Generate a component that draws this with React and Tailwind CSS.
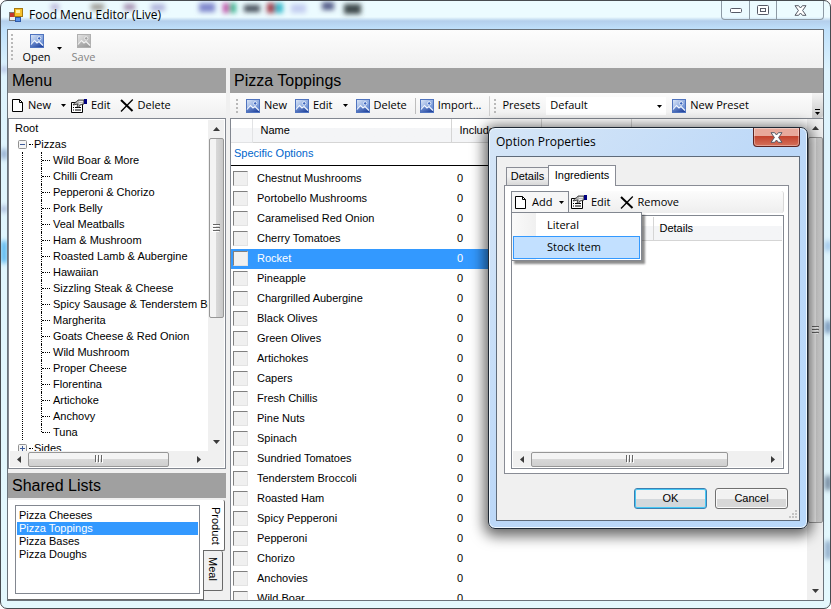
import React, { useState } from "react";

const pizzas = [
  "Wild Boar & More", "Chilli Cream", "Pepperoni & Chorizo", "Pork Belly",
  "Veal Meatballs", "Ham & Mushroom", "Roasted Lamb & Aubergine", "Hawaiian",
  "Sizzling Steak & Cheese", "Spicy Sausage & Tenderstem Broccoli", "Margherita",
  "Goats Cheese & Red Onion", "Wild Mushroom", "Proper Cheese", "Florentina",
  "Artichoke", "Anchovy", "Tuna",
];

const toppings = [
  "Chestnut Mushrooms", "Portobello Mushrooms", "Caramelised Red Onion",
  "Cherry Tomatoes", "Rocket", "Pineapple", "Chargrilled Aubergine",
  "Black Olives", "Green Olives", "Artichokes", "Capers", "Fresh Chillis",
  "Pine Nuts", "Spinach", "Sundried Tomatoes", "Tenderstem Broccoli",
  "Roasted Ham", "Spicy Pepperoni", "Pepperoni", "Chorizo", "Anchovies",
  "Wild Boar",
];

const sharedLists = ["Pizza Cheeses", "Pizza Toppings", "Pizza Bases", "Pizza Doughs"];

function PictureIcon({ muted = false }) {
  const id = muted ? "pic-muted" : "pic-blue";
  return (
    <svg width="14" height="14" viewBox="0 0 14 14" className="shrink-0" aria-hidden="true">
      <defs>
        <linearGradient id={`${id}-sky`} x1="0" y1="0" x2="1" y2="1">
          <stop offset="0" stopColor={muted ? "#e4e4e4" : "#dfe9f8"} />
          <stop offset="1" stopColor={muted ? "#a8a8a8" : "#4b77cb"} />
        </linearGradient>
        <linearGradient id={`${id}-hill`} x1="0" y1="0" x2="1" y2="1">
          <stop offset="0" stopColor={muted ? "#c0c0c0" : "#86a6e0"} />
          <stop offset="1" stopColor={muted ? "#979797" : "#1a3c98"} />
        </linearGradient>
      </defs>
      <rect x="0.5" y="0.5" width="13" height="13" fill={`url(#${id}-sky)`} stroke={muted ? "#b0b0b0" : "#5074bf"} />
      <path d="M1 10.5L4.5 6.5L7 9L9 7.5L13 11.5V13H1Z" fill={`url(#${id}-hill)`} />
      <path d="M1 10.5L4.5 6.5L7 9L9 7.5L13 11.5" fill="none" stroke={muted ? "#f2f2f2" : "#f2f7ff"} strokeWidth="1.1" />
      <circle cx="9.2" cy="4.4" r="1.7" fill={muted ? "#a0a0a0" : "#3d66bd"} stroke={muted ? "#f2f2f2" : "#f2f7ff"} strokeWidth="0.9" />
    </svg>
  );
}

function PageIcon() {
  return (
    <svg width="12" height="14" viewBox="0 0 12 14" className="shrink-0" aria-hidden="true">
      <path d="M0.5 0.5H7.5L10.5 3.5V12.5H0.5Z" fill="#fff" stroke="#000" />
      <path d="M7.5 0.5V3.5H10.5" fill="none" stroke="#000" />
    </svg>
  );
}

function PropertiesIcon() {
  return (
    <svg width="16" height="14" viewBox="0 0 16 14" className="shrink-0" aria-hidden="true">
      <path d="M0.5 3.5H11.5V13.5H0.5Z" fill="#fff" stroke="#000" />
      <path d="M2 8.5H3M4 8.5H10M2 11H3M4 11H10" stroke="#000" />
      <path d="M2 6L4 3.5L6 2.5L7 1H13V5L9 6L7.5 8.5L6 7.5L7 5Z" fill="#b8b8b8" stroke="#222" strokeWidth="0.8" />
      <path d="M8 2.5H12M8 4.5H11" stroke="#fff" strokeWidth="0.7" />
      <path d="M13 0H16V5H13Z" fill="#000080" />
    </svg>
  );
}

function CrossIcon() {
  return (
    <svg width="14" height="13" viewBox="0 0 14 13" className="shrink-0" aria-hidden="true">
      <path d="M1 1L12.5 12" stroke="#000" strokeWidth="2" />
      <path d="M12.8 0.5L1 12.5" stroke="#000" strokeWidth="1.3" />
    </svg>
  );
}

function CloseGlyph() {
  return (
    <svg width="13" height="11" viewBox="0 0 13 11" aria-hidden="true">
      <path d="M1 0.7H4.6L6.5 3L8.4 0.7H12L8.6 5.5L12 10.3H8.4L6.5 8L4.6 10.3H1L4.4 5.5Z" fill="#fff" stroke="#565a66" />
    </svg>
  );
}

function DownArrow() {
  return (
    <svg width="5" height="3" viewBox="0 0 5 3" className="shrink-0" aria-hidden="true">
      <path d="M0 0H5L2.5 3Z" fill="#000" />
    </svg>
  );
}

function ScrollArrow({ d }) {
  return (
    <svg width="7" height="7" viewBox="0 0 7 7" aria-hidden="true">
      <path d={d} fill="#3a3a3a" />
    </svg>
  );
}

function Grip({ vertical = false }) {
  return (
    <svg width="8" height="8" viewBox="0 0 8 8" className={vertical ? "rotate-90" : ""} aria-hidden="true">
      <path d="M0.5 0V7M3.5 0V7M6.5 0V7" stroke="#666" />
      <path d="M1.5 1V8M4.5 1V8M7.5 1V8" stroke="#fff" />
    </svg>
  );
}

function HScroll({ thumb }) {
  return (
    <div className="flex h-4 shrink-0 items-center bg-[#f0f0f0]">
      <div className="flex w-[18px] justify-center"><ScrollArrow d="M5 0V7L1 3.5Z" /></div>
      <div className={`flex h-[15px] items-center justify-center rounded-[2px] border border-[#979797] bg-linear-to-b from-[#f4f4f4] from-50% via-[#d8d8d8] via-50% to-[#cfcfcf] ${thumb}`}>
        <Grip />
      </div>
      <div className="ml-auto flex w-5 justify-center"><ScrollArrow d="M2 0V7L6 3.5Z" /></div>
    </div>
  );
}

function VScroll({ thumb }) {
  return (
    <div className="flex w-4 shrink-0 flex-col items-center bg-[#f0f0f0]">
      <div className="flex h-[18px] items-center"><ScrollArrow d="M0 5H7L3.5 1Z" /></div>
      <div className={`flex w-[15px] items-center justify-center rounded-[2px] border border-[#979797] bg-linear-to-r from-[#f4f4f4] from-50% via-[#d8d8d8] via-50% to-[#c8c8c8] ${thumb}`}>
        <Grip vertical />
      </div>
      <div className="mt-auto flex h-5 items-center"><ScrollArrow d="M0 2H7L3.5 6Z" /></div>
    </div>
  );
}

function Handle({ tall = false }) {
  return <span className={`w-0.5 shrink-0 bg-[repeating-linear-gradient(to_bottom,#b9b9b9_0px,#b9b9b9_2px,transparent_2px,transparent_4px)] ${tall ? "h-[26px]" : "h-[14px]"}`} />;
}

function ToolButton({ icon, label, arrow = false }) {
  return (
    <button type="button" className="flex shrink-0 items-center gap-1 whitespace-nowrap">
      {icon}
      <span>{label}</span>
      {arrow && <span className="ml-1.5"><DownArrow /></span>}
    </button>
  );
}

function SectionTitle({ children }) {
  return (
    <h2 className="h-[25px] shrink-0 bg-[#a0a0a0] pl-1 font-['Liberation_Sans',sans-serif] text-base leading-[25px]">
      {children}
    </h2>
  );
}

function Expander({ open = false }) {
  return (
    <svg width="9" height="9" viewBox="0 0 9 9" className="shrink-0" aria-hidden="true">
      <rect x="0.5" y="0.5" width="8" height="8" rx="1" fill="#f4f4f4" stroke="#919191" />
      <path d={open ? "M2 4.5H7" : "M2 4.5H7M4.5 2V7"} stroke="#3b5a9a" />
    </svg>
  );
}

function MenuTree() {
  return (
    <div className="flex min-h-0 flex-1 flex-col border border-[#828790] bg-white p-px font-['Liberation_Sans',sans-serif]">
      <div className="flex min-h-0 flex-1">
        <div className="min-w-0 flex-1 overflow-hidden whitespace-nowrap pl-[5px] leading-4">
          <div>Root</div>
          <div className="flex items-center pl-[3px]">
            <Expander open />
            <span className="w-[7px] pl-0.5"><span className="block w-1 border-t border-dotted border-black" /></span>
            <span>Pizzas</span>
          </div>
          <ul className="ml-[7px] border-l border-dotted border-black pl-[18px]">
            {pizzas.map((p, i) => (
              <li key={p} className="flex">
                <span className={`border-l border-dotted border-black ${i === pizzas.length - 1 ? "h-2" : "h-4"}`} />
                <span className="mr-[3px] mt-2 w-2 shrink-0 border-t border-dotted border-black" />
                <span>{p}</span>
              </li>
            ))}
          </ul>
          <div className="flex items-center pl-[3px]">
            <Expander />
            <span className="w-[7px] pl-0.5"><span className="block w-1 border-t border-dotted border-black" /></span>
            <span>Sides</span>
          </div>
        </div>
        <VScroll thumb="h-[180px]" />
      </div>
      <div className="bg-[#f0f0f0] pr-4"><HScroll thumb="w-[141px]" /></div>
    </div>
  );
}

function SharedLists() {
  return (
    <div className="flex h-[102px] shrink-0 pt-0.5 font-['Liberation_Sans',sans-serif]">
      <div className="flex-1 border-b border-r border-[#696969] bg-white p-[5px_3px_5px_7px]">
        <ul className="h-full border border-[#828790] bg-white p-px pt-[3px] leading-[13px]">
          {sharedLists.map((s) => (
            <li key={s} className={`pl-0.5 ${s === "Pizza Toppings" ? "bg-[#3399ff] text-white" : ""}`}>{s}</li>
          ))}
        </ul>
      </div>
      <div className="flex w-[22px] flex-col items-start">
        <button type="button" className="-ml-px h-[51px] w-[22px] rounded-r-[2px] border-b border-r border-[#696969] bg-white pl-1 pt-0.5 [writing-mode:vertical-rl]">Product</button>
        <button type="button" className="h-10 w-[19px] rounded-r-[2px] border-b border-r border-[#696969] bg-[#f0f0f0] pb-1 [writing-mode:vertical-rl]">Meal</button>
      </div>
    </div>
  );
}

function ToppingsTable() {
  return (
    <div className="flex min-h-0 flex-1 border-l border-t border-[#828790] bg-white font-['Liberation_Sans',sans-serif]">
      <div className="min-w-0 flex-1 overflow-hidden">
        <table className="w-full table-fixed border-collapse text-left">
          <colgroup>
            <col className="w-[21px]" />
            <col className="w-[199px]" />
            <col className="w-[90px]" />
            <col className="w-[90px]" />
            <col />
          </colgroup>
          <thead>
            <tr className="h-[23px] bg-linear-to-b from-white from-40% to-[#f4f5f7] to-40%">
              <th className="border-b border-r border-[#e2e3e5]" />
              <th className="border-b border-r border-[#d5d5d5] pl-2 font-normal">Name</th>
              <th className="border-b border-r border-[#d5d5d5] pl-2 font-normal">Include</th>
              <th className="border-b border-r border-[#d5d5d5]" />
              <th className="border-b border-[#d5d5d5]" />
            </tr>
            <tr className="h-[23px] border-b border-black">
              <th colSpan={5} className="pl-[3px] font-normal text-[#0066cc]">Specific Options</th>
            </tr>
          </thead>
          <tbody className="before:block before:h-[3px]">
            {toppings.map((t) => (
              <tr key={t} className={t === "Rocket" ? "h-5 bg-[#3399ff] text-white" : "h-5"}>
                <td className="pl-0.5">
                  <input type="checkbox" aria-label={t} className="block h-[15px] w-[15px] appearance-none border border-b-[#e3e3e3] border-l-[#808080] border-r-[#e3e3e3] border-t-[#808080] bg-[#f0f0f0]" />
                </td>
                <td className="pl-[5px]">{t}</td>
                <td className="pl-[6px]">0</td>
                <td />
                <td />
              </tr>
            ))}
          </tbody>
        </table>
      </div>
      <VScroll thumb="h-[386px]" />
    </div>
  );
}

function OptionDialog() {
  return (
    <section role="dialog" aria-label="Option Properties" className="absolute left-[487px] top-[126px] flex h-[402px] w-[320px] flex-col rounded-[7px] border border-[#1d2733] bg-linear-to-br from-[#d6e6f7] via-[#bcd8f8] to-[#b9d9fb] p-[7px] pt-0 shadow-[0_3px_14px_4px_rgba(0,0,0,0.6),inset_0_0_0_1px_#eef7ff]">
      <header className="flex h-[28px] shrink-0 items-center">
        <h1 className="flex-1 text-[12px]">Option Properties</h1>
        <button type="button" aria-label="Close dialog" className="flex h-[19px] w-[47px] items-center justify-center self-start rounded-b-[4px] border border-t-0 border-[#5b2321] bg-linear-to-b from-[#e8a99b] from-45% via-[#c2412c] via-45% to-[#d4705a] shadow-[inset_0_0_0_1px_rgba(255,255,255,0.35)]">
          <CloseGlyph />
        </button>
      </header>
      <div className="flex min-h-0 flex-1 flex-col border border-[#5f6b7a] bg-[#f0f0f0] pb-[11px] pl-[7px] pr-[10px] pt-2 font-['Liberation_Sans',sans-serif]">
        <div role="tablist" className="flex items-end pl-0.5">
          <button type="button" role="tab" aria-selected="false" className="h-[18px] w-[42px] border border-b-0 border-r-0 border-[#898c95] bg-linear-to-b from-[#f2f2f2] from-50% to-[#d8d8d8]">Details</button>
          <button type="button" role="tab" aria-selected="true" className="z-10 -mb-px h-[21px] w-[68px] border border-b-0 border-[#898c95] bg-white pb-px">Ingredients</button>
        </div>
        <div className="flex min-h-0 flex-1 flex-col border border-[#898c95] bg-white p-[5px_4px_4px_6px]">
          <div className="relative flex h-[22px] shrink-0 items-center rounded-r-[3px] border-r border-[#d8d8d8] bg-linear-to-b from-[#fcfcfc] to-[#eeeeee] font-['Open_Sans',sans-serif]">
            <div className="flex h-full w-[58px] items-center border border-b-0 border-[#828790] bg-[#f6f6f6] pl-[3px]">
              <button type="button" aria-haspopup="menu" aria-expanded="true" className="flex items-center gap-[5px]">
                <PageIcon /><span>Add</span><span className="ml-0.5"><DownArrow /></span>
              </button>
            </div>
            <div className="flex gap-[9px] pl-0.5">
              <ToolButton icon={<PropertiesIcon />} label="Edit" />
              <ToolButton icon={<CrossIcon />} label="Remove" />
            </div>
            <div role="menu" className="absolute left-0 top-[21px] z-20 w-[131px] border border-[#828790] bg-[linear-gradient(to_right,#fafafa_0px,#f0f0f0_24px,#ffffff_24px)] p-px shadow-[3px_3px_2px_rgba(0,0,0,0.45)]">
              <button type="button" role="menuitem" className="block h-[22px] w-full pl-[34px] text-left">Literal</button>
              <button type="button" role="menuitem" className="block h-[23px] w-full border border-[#3399ff] bg-[#c2e0ff] pl-[33px] text-left">Stock Item</button>
            </div>
          </div>
          <div className="mt-0.5 flex min-h-0 flex-1 flex-col border border-[#828790] p-px">
            <table className="w-full table-fixed border-collapse text-left">
              <thead>
                <tr className="h-[23px] bg-linear-to-b from-white from-40% to-[#f4f5f7] to-40%">
                  <th className="w-[140px] border-b border-r border-[#d5d5d5]" aria-label="Ingredient" />
                  <th className="border-b border-[#d5d5d5] pl-1.5 font-normal">Details</th>
                </tr>
              </thead>
            </table>
            <div className="mt-auto"><HScroll thumb="w-[197px]" /></div>
          </div>
        </div>
        <div className="flex shrink-0 justify-end gap-2 pr-px pt-[14px]">
          <button type="button" className="h-[21px] w-[73px] rounded-[3px] border border-[#3c7fb1] bg-linear-to-b from-[#f2f2f2] from-50% to-[#d3d8dc] to-50% shadow-[inset_0_0_0_1px_#46c8f5]">OK</button>
          <button type="button" className="h-[21px] w-[73px] rounded-[3px] border border-[#707070] bg-linear-to-b from-[#f2f2f2] from-50% to-[#d8d8d8] to-50% shadow-[inset_0_0_0_1px_#fafafa]">Cancel</button>
        </div>
        <svg width="10" height="10" viewBox="0 0 10 10" className="absolute bottom-[9px] right-[9px]" aria-hidden="true">
          <path d="M7 1h2v2h-2zM4 4h2v2h-2zM7 4h2v2h-2zM1 7h2v2h-2zM4 7h2v2h-2zM7 7h2v2h-2z" fill="#c4c4c4" />
        </svg>
      </div>
    </section>
  );
}

function GlassBackdrop() {
  return (
    <svg className="absolute inset-0 h-full w-full" aria-hidden="true">
      <defs><filter id="soft" x="-50%" y="-50%" width="200%" height="200%"><feGaussianBlur stdDeviation="2.5" /></filter></defs>
      <g filter="url(#soft)">
        <rect x="50" y="3" width="8" height="6" fill="#b9b3d8" />
        <rect x="90" y="3" width="13" height="6" fill="#99968f" />
        <rect x="123" y="3" width="11" height="6" fill="#a28bad" />
        <rect x="150" y="3" width="14" height="7" fill="#b0b4dc" />
        <rect x="198" y="2" width="16" height="9" fill="#7f86cc" />
        <rect x="222" y="2" width="6" height="10" fill="#c04fa8" />
        <rect x="229" y="2" width="6" height="10" fill="#38b28f" />
        <rect x="243" y="4" width="16" height="7" fill="#45505a" />
        <rect x="266" y="2" width="8" height="10" fill="#a33b4a" />
        <rect x="274" y="2" width="8" height="10" fill="#36b9cc" />
        <rect x="290" y="3" width="15" height="9" fill="#c3cdf0" />
        <rect x="321" y="1" width="12" height="8" fill="#525b88" />
        <rect x="343" y="3" width="17" height="10" fill="#3c4a4c" />
        <rect x="0" y="66" width="6" height="5" fill="#a9b4dc" />
        <rect x="0" y="148" width="6" height="10" fill="#8fa8cc" />
        <rect x="0" y="205" width="6" height="6" fill="#9fb0d4" />
        <rect x="0" y="240" width="6" height="22" fill="#50b4ee" />
        <rect x="824" y="240" width="6" height="10" fill="#9cc4ea" />
        <rect x="824" y="320" width="6" height="12" fill="#6d8db4" />
        <rect x="824" y="475" width="6" height="14" fill="#6a7f96" />
        <rect x="824" y="540" width="6" height="18" fill="#8aa6c6" />
      </g>
    </svg>
  );
}

export default function App() {
  const [preset, setPreset] = useState("Default");
  return (
    <div className="relative flex h-screen flex-col overflow-hidden rounded-[7px] border border-[#474b50] bg-[linear-gradient(to_bottom,#ecfbff_0px,#ecfbff_16px,#b4cfec_20px,#bfe0fb_28px,#def3fd_70px,#e4f8fd_100%)] px-[6px] pb-[7px] font-['Open_Sans',sans-serif] text-[11px] text-black">
      <GlassBackdrop />
      <header className="relative flex h-[28px] shrink-0 items-center gap-[6px] pl-0.5">
        <svg width="14" height="14" viewBox="0 0 14 14" aria-hidden="true">
          <rect x="0.5" y="4.5" width="8" height="8" fill="#eee" stroke="#777" />
          <rect x="1" y="5" width="4" height="4" fill="#c4372e" />
          <rect x="5.5" y="0.5" width="8" height="8" fill="#f6c12c" stroke="#a77a10" />
          <rect x="7" y="2" width="4" height="3" fill="#fff1a8" />
          <rect x="6.5" y="9.5" width="5" height="4" fill="#5c93e8" stroke="#2d59a8" />
        </svg>
        <h1 className="flex-1 text-[12px]">Food Menu Editor (Live)</h1>
        <div className="flex h-[19px] self-start divide-x divide-[#8d9aa5] rounded-b-[4px] border border-t-0 border-[#8d9aa5]">
          <button type="button" aria-label="Minimise" className="flex w-7 items-center justify-center">
            <svg width="12" height="5" viewBox="0 0 12 5"><rect x="0.5" y="0.5" width="11" height="4" rx="1" fill="#fff" stroke="#565a66" /></svg>
          </button>
          <button type="button" aria-label="Restore" className="flex w-[27px] items-center justify-center">
            <svg width="12" height="10" viewBox="0 0 12 10"><rect x="0.5" y="0.5" width="11" height="9" rx="1" fill="#fff" stroke="#565a66" /><rect x="3.5" y="3.5" width="5" height="3" fill="#fff" stroke="#565a66" /></svg>
          </button>
          <button type="button" aria-label="Close" className="flex w-[46px] items-center justify-center">
            <CloseGlyph />
          </button>
        </div>
      </header>

      <main className="relative flex min-h-0 flex-1 flex-col border border-[#6a727a] bg-[#f0f0f0]">
        <div className="flex h-[38px] shrink-0 items-start bg-linear-to-b from-[#fdfdfd] to-[#f0f0f0] pl-[3px] pt-1">
          <Handle tall />
          <button type="button" className="ml-[9px] flex w-[29px] flex-col items-center leading-[18px]">
            <PictureIcon /><span>Open</span>
          </button>
          <span className="ml-1.5 pt-[13px]"><DownArrow /></span>
          <button type="button" className="ml-[9px] flex w-[25px] flex-col items-center leading-[18px] text-[#838383]">
            <PictureIcon muted /><span>Save</span>
          </button>
        </div>

        <div className="flex min-h-0 flex-1 gap-1">
          <aside className="flex w-[218px] shrink-0 flex-col">
            <SectionTitle>Menu</SectionTitle>
            <div className="flex h-[25px] shrink-0 items-center gap-[9px] bg-linear-to-b from-[#fcfcfc] to-[#f0f0f0] pl-1">
              <ToolButton icon={<PageIcon />} label="New" arrow />
              <span className="-ml-1"><ToolButton icon={<PropertiesIcon />} label="Edit" /></span>
              <ToolButton icon={<CrossIcon />} label="Delete" />
            </div>
            <MenuTree />
            <div className="mt-1"><SectionTitle>Shared Lists</SectionTitle></div>
            <SharedLists />
          </aside>

          <section className="flex min-w-0 flex-1 flex-col">
            <SectionTitle>Pizza Toppings</SectionTitle>
            <div className="flex h-[25px] shrink-0 items-center bg-linear-to-b from-[#fcfcfc] to-[#f0f0f0] pl-1.5">
              <div className="flex items-center gap-2">
                <Handle />
                <ToolButton icon={<PictureIcon />} label="New" />
                <ToolButton icon={<PictureIcon />} label="Edit" arrow />
                <ToolButton icon={<PictureIcon />} label="Delete" />
                <span className="h-4 w-px bg-[#bdbdbd]" />
                <span className="-ml-1"><ToolButton icon={<PictureIcon />} label="Import..." /></span>
                <span className="h-5 w-px rounded bg-[#d0d0d0]" />
              </div>
              <div className="ml-1 flex items-center gap-1.5">
                <Handle />
                <label htmlFor="preset">Presets</label>
                <span className="relative flex h-[18px] w-[120px] items-center bg-white">
                  <select id="preset" value={preset} onChange={(e) => setPreset(e.target.value)} className="w-full appearance-none bg-transparent pl-1 outline-none">
                    <option>Default</option>
                  </select>
                  <span className="pointer-events-none absolute right-1 top-2"><DownArrow /></span>
                </span>
                <ToolButton icon={<PictureIcon />} label="New Preset" />
              </div>
              <button type="button" aria-label="More tools" className="ml-auto flex h-full w-[11px] items-end justify-center rounded-r-[3px] bg-linear-to-b from-[#f4f4f4] to-[#c8c8c8] pb-[3px]">
                <svg width="6" height="6" viewBox="0 0 6 6"><path d="M0 0.5H5" stroke="#000" /><path d="M0 3H5L2.5 6Z" fill="#000" /></svg>
              </button>
            </div>
            <ToppingsTable />
          </section>
        </div>
      </main>
      <OptionDialog />
    </div>
  );
}
